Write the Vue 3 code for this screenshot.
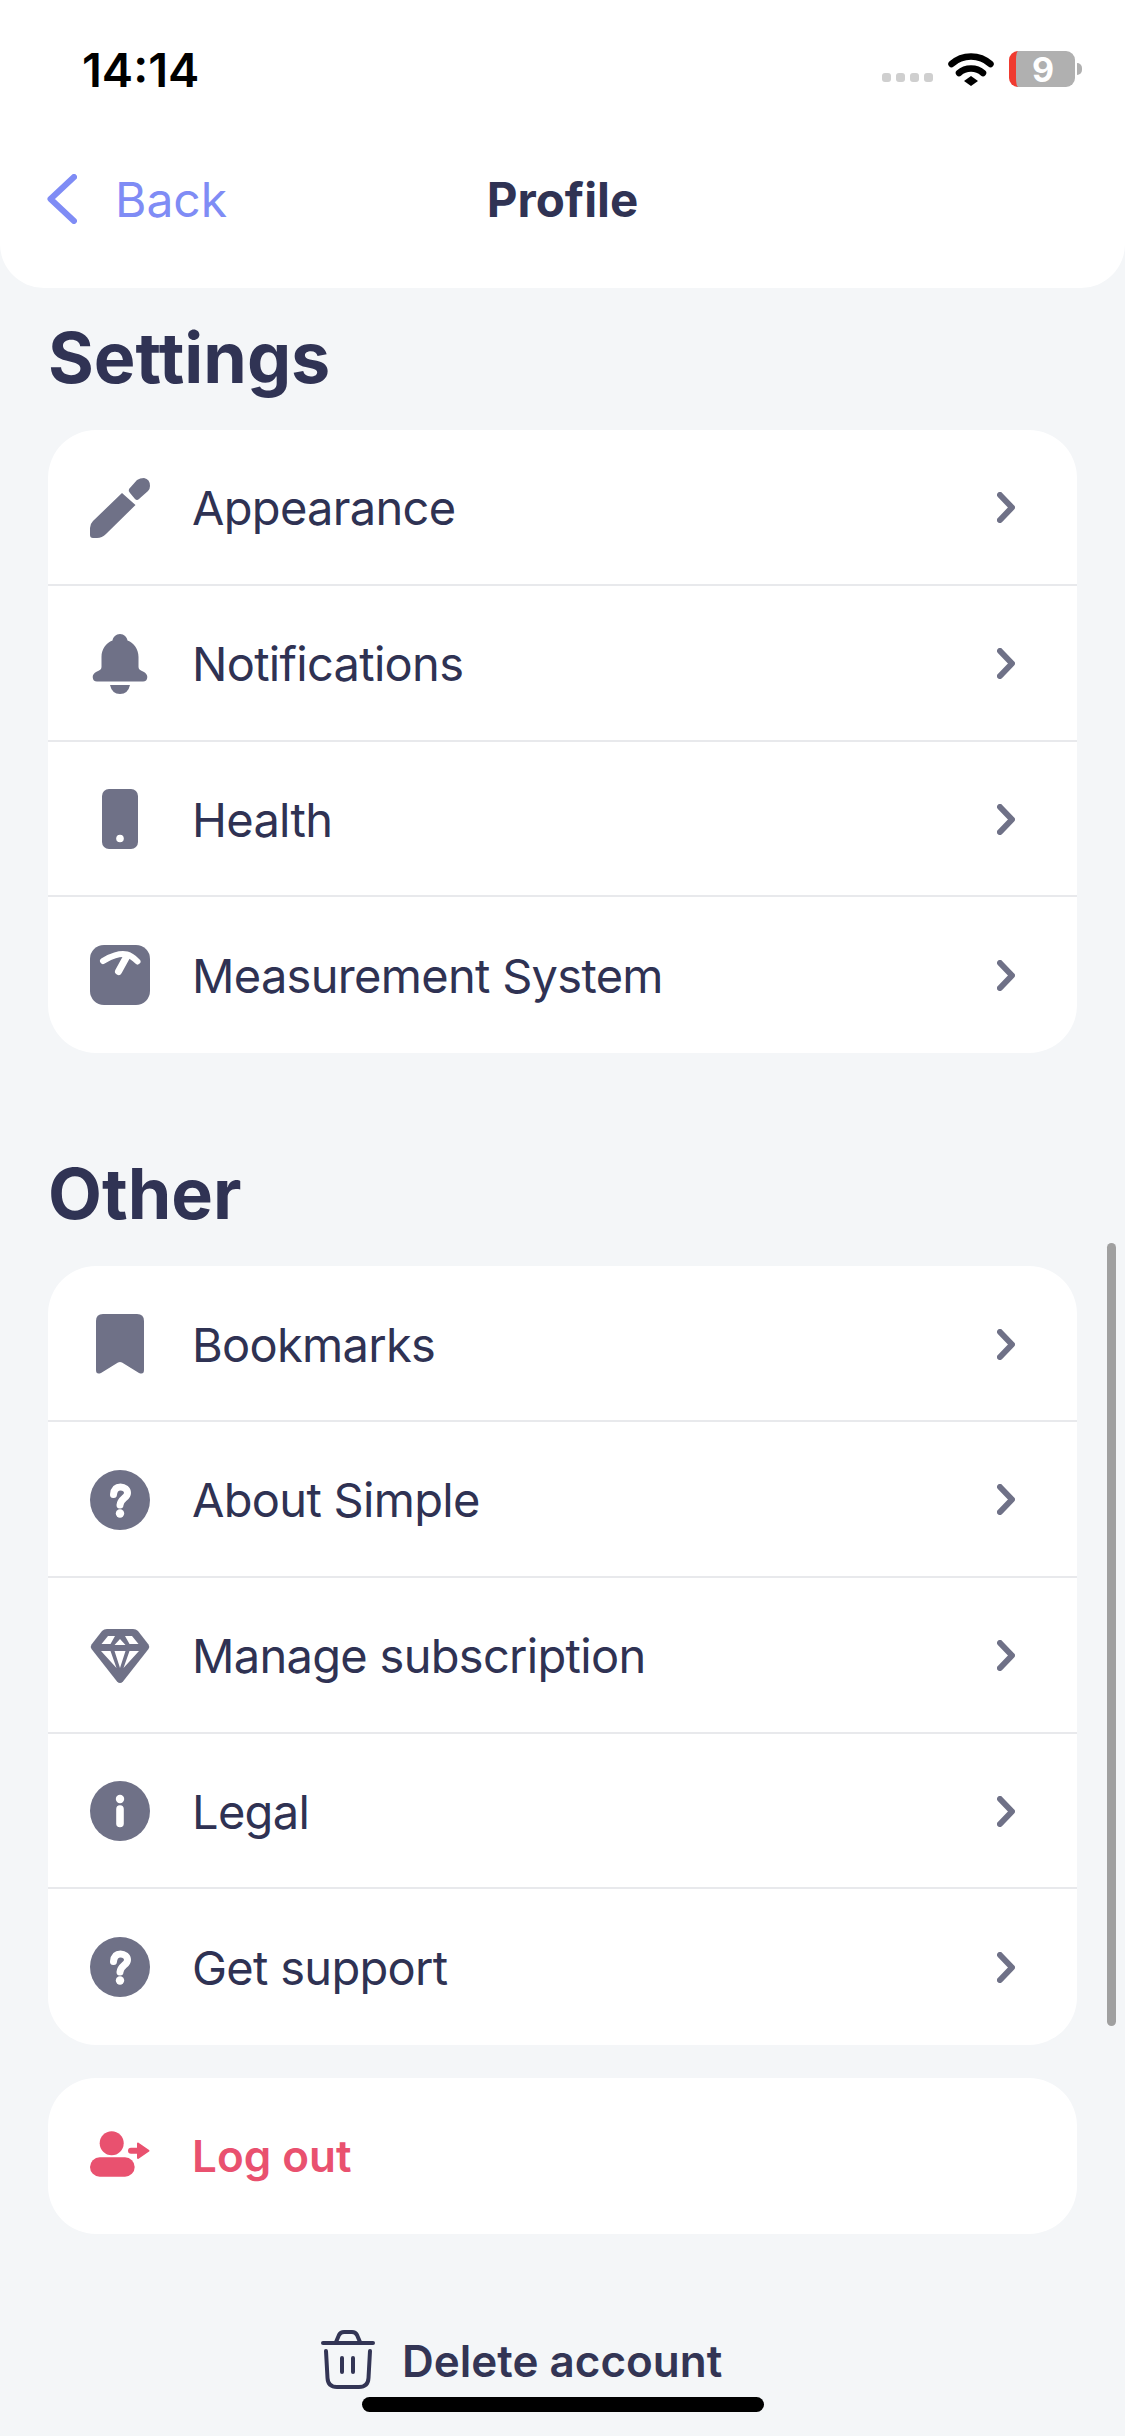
<script setup>
import { ref } from 'vue';

const sections = ref([
    {
        title: 'Settings',
        rows: [
            { label: 'Appearance', icon: 'pencil' },
            { label: 'Notifications', icon: 'bell' },
            { label: 'Health', icon: 'phone' },
            { label: 'Measurement System', icon: 'scale' }
        ]
    },
    {
        title: 'Other',
        rows: [
            { label: 'Bookmarks', icon: 'bookmark' },
            { label: 'About Simple', icon: 'question' },
            { label: 'Manage subscription', icon: 'diamond' },
            { label: 'Legal', icon: 'info' },
            { label: 'Get support', icon: 'question' }
        ]
    }
]);
</script>

<template>
    <div class="page">
        <header class="top">
            <div class="status-bar">
                <span class="time">14:14</span>
                <div class="status-icons">
                    <div class="signal"><i></i><i></i><i></i><i></i></div>
                    <svg class="wifi" viewBox="0 0 46 33" width="46" height="33">
                        <path d="M3.500 11C14.500 1 31.500 1 42.500 11" fill="none" stroke="#000" stroke-width="6.500" stroke-linecap="round" />
                        <path d="M11 20C17.500 14 28.500 14 35 20" fill="none" stroke="#000" stroke-width="6.500" stroke-linecap="round" />
                        <path d="M23 23L30 28L23 33L16 28Z" fill="#000" />
                    </svg>
                    <div class="battery">
                        <div class="battery-body"><span>9</span></div>
                        <div class="battery-nub"></div>
                    </div>
                </div>
            </div>
            <nav class="nav">
                <div class="back">
                    <svg viewBox="0 0 30 50" width="30" height="50">
                        <path d="M27 3L3.500 25L27 47" fill="none" stroke="#7f8cf5" stroke-width="6" stroke-linecap="round" stroke-linejoin="round" />
                    </svg>
                    <span>Back</span>
                </div>
                <h1>Profile</h1>
                <div></div>
            </nav>
        </header>

        <main class="content">
            <section v-for="section in sections" :key="section.title" class="section">
                <h2>{{ section.title }}</h2>
                <div class="card">
                    <div v-for="row in section.rows" :key="row.label" class="row">
                        <svg class="row-icon" viewBox="0 0 60 60" width="60" height="60">
                            <template v-if="row.icon === 'pencil'">
                                <path d="M32 15L45.500 27L16 56Q12 60 7 60H3Q0 60 0 57V50Q0 46 3 43Z" />
                                <path d="M39 11L47 2Q50 0 54 0Q60 1 60 8Q60 11 58 13L49 21Q47 23 45 21L40 15Q38 13 39 11Z" />
                            </template>
                            <template v-else-if="row.icon === 'bell'">
                                <path d="M30 0C34 0 37 3 37.500 6.500C44 9 48.500 15 48.500 23V33C48.500 35 50 36.500 54 38C56 39 57.300 41 57.300 43C57.300 46 55.500 47.500 53 47.500H7C4.500 47.500 2.700 46 2.700 43C2.700 41 4 39 6 38C10 36.500 11.500 35 11.500 33V23C11.500 15 16 9 22.500 6.500C23 3 26 0 30 0Z" />
                                <path d="M20 51H40Q38 60 30 60Q22 60 20 51Z" />
                            </template>
                            <template v-else-if="row.icon === 'phone'">
                                <rect x="12" y="0" width="36" height="60" rx="7" />
                                <circle cx="30" cy="49.500" r="3.800" fill="#fff" />
                            </template>
                            <template v-else-if="row.icon === 'scale'">
                                <rect x="0" y="0" width="60" height="60" rx="14" />
                                <path d="M13 16C20 11 30 8 37 9.500C41 10.500 44 13 47.500 16.500" fill="none" stroke="#fff" stroke-width="6" stroke-linecap="round" />
                                <path d="M37 11L28.500 26.500" fill="none" stroke="#fff" stroke-width="7" stroke-linecap="round" />
                            </template>
                            <template v-else-if="row.icon === 'bookmark'">
                                <path d="M13 0H47Q54 0 54 7V56Q54 61 49 59L32 48.500Q30 47.500 28 48.500L11 59Q6 61 6 56V7Q6 0 13 0Z" />
                            </template>
                            <template v-else-if="row.icon === 'question'">
                                <circle cx="30" cy="30" r="30" />
                                <path d="M23.500 24.500C24 19 27 17 30.500 17C34.500 17 37.500 19.500 37.500 23C37.500 28 30.500 28.500 30 35" fill="none" stroke="#fff" stroke-width="7" stroke-linecap="round" />
                                <circle cx="30" cy="43.500" r="4.200" fill="#fff" />
                            </template>
                            <template v-else-if="row.icon === 'diamond'">
                                <path d="M17 3H43Q46 3 48 5L58.500 18.500Q60 21 58.500 23L33 55.500Q30 58.500 27 55.500L1.500 23Q0 21 1.500 18.500L12 5Q14 3 17 3Z" />
                                <path d="M18 10L25 10L20.500 18H11.500ZM35 10H42L48.500 18H39.500ZM30 13L35.500 19H24.500ZM11 25H20.500L26.500 42ZM24.500 25H35.500L30 42ZM39.500 25H49L33.500 42Z" fill="#fff" />
                            </template>
                            <template v-else-if="row.icon === 'info'">
                                <circle cx="30" cy="30" r="30" />
                                <circle cx="30" cy="18" r="4.200" fill="#fff" />
                                <path d="M30 28V42.500" fill="none" stroke="#fff" stroke-width="7.600" stroke-linecap="round" />
                            </template>
                        </svg>
                        <span class="row-label">{{ row.label }}</span>
                        <svg class="chevron" viewBox="0 0 18 31" width="18" height="31">
                            <path d="M3 3L15 15.500L3 28" fill="none" stroke="#6f7187" stroke-width="6" stroke-linecap="round" stroke-linejoin="round" />
                        </svg>
                    </div>
                </div>
            </section>

            <div class="card logout">
                <div class="row">
                    <svg class="row-icon logout-icon" viewBox="0 0 60 60" width="60" height="60">
                        <circle cx="21.700" cy="17.300" r="12" />
                        <rect x="0" y="31.300" width="44.700" height="19.400" rx="9.700" />
                        <path d="M41 24.700H50" fill="none" stroke="#e9516f" stroke-width="6" stroke-linecap="round" />
                        <path d="M48 17.500L58.500 24.700L48 32Z" stroke="#e9516f" stroke-width="2" stroke-linejoin="round" />
                    </svg>
                    <span class="row-label logout-label">Log out</span>
                </div>
            </div>

            <div class="delete">
                <svg viewBox="0 0 54 59" width="54" height="59">
                    <g fill="none" stroke="#333555" stroke-width="4" stroke-linecap="round" stroke-linejoin="round">
                        <path d="M2 13H52" />
                        <path d="M15 12L18 5Q19.500 2 23 2H31Q34.500 2 36 5L39 12" />
                        <path d="M5 21L6.500 48Q7 57 16 57H38Q47 57 47.500 48L49 21" />
                        <path d="M21 28V42M32 28V42" />
                    </g>
                </svg>
                <span>Delete account</span>
            </div>
        </main>

        <div class="scrollbar"></div>
        <div class="home-indicator"></div>
    </div>
</template>

<style scoped>
.page {
    position: relative;
    width: 1125px;
    height: 2436px;
    overflow: hidden;
    background: #f4f6f8;
    font-family: Inter, "Liberation Sans", sans-serif;
    color: #2f3253;
}

.top {
    height: 288px;
    background: #fff;
    border-radius: 0 0 44px 44px;
}

.status-bar {
    display: flex;
    justify-content: space-between;
    align-items: center;
    height: 138px;
    padding: 0 43px 0 82px;
}

.time {
    font-size: 47px;
    font-weight: 600;
    color: #000;
}

.status-icons {
    display: flex;
    align-items: center;
}

.signal {
    display: flex;
    gap: 5px;
    margin: 16px 15px 0 0;
}

.signal i {
    width: 9px;
    height: 9px;
    border-radius: 3px;
    background: #cfcfcf;
}

.battery {
    display: flex;
    align-items: center;
    margin-left: 15px;
}

.battery-body {
    display: flex;
    justify-content: center;
    align-items: center;
    width: 66px;
    height: 36px;
    box-sizing: border-box;
    padding-right: 5px;
    border-left: 7px solid #f03b30;
    border-radius: 9px;
    background: #b0b0b0;
    color: #fff;
    font-size: 34px;
    font-weight: 700;
}

.battery-nub {
    width: 5px;
    height: 12px;
    margin-left: 2px;
    border-radius: 0 6px 6px 0;
    background: #b0b0b0;
}

.nav {
    display: grid;
    grid-template-columns: 1fr auto 1fr;
    align-items: center;
    height: 122px;
    padding: 0 47px;
}

.back {
    display: flex;
    align-items: center;
    gap: 38px;
    font-size: 48px;
    color: #7f8cf5;
}

.nav h1 {
    margin: 0;
    font-size: 47.500px;
    font-weight: 700;
    color: #303354;
}

.content {
    padding: 0 48px;
}

.section h2 {
    margin: 0;
    font-size: 70px;
    line-height: 84px;
    font-weight: 700;
    color: #303354;
}

.section {
    padding-top: 28px;
    margin-bottom: 33px;
}

.section + .section {
    padding-top: 66px;
}

.card {
    margin-top: 30px;
    border-radius: 48px;
    background: #fff;
    overflow: hidden;
}

.row {
    display: flex;
    align-items: center;
    height: 155.800px;
    box-sizing: border-box;
    padding: 2px 62px 0 42px;
    border-bottom: 2px solid #e8e9ec;
}

.row:last-child {
    padding-top: 0;
    border-bottom: 0;
}

.row-icon {
    flex: none;
    fill: #6f7187;
}

.row-label {
    flex: 1;
    margin-left: 42px;
    font-size: 47px;
    letter-spacing: -0.700px;
}

.chevron {
    flex: none;
}

.logout {
    margin-top: 0;
}

.logout-icon {
    fill: #e9516f;
}

.logout-label {
    font-size: 44px;
    letter-spacing: 0;
    font-weight: 600;
    color: #e9516f;
}

.delete {
    display: flex;
    align-items: center;
    gap: 27px;
    margin: 96px 0 0 273px;
    font-size: 44px;
    font-weight: 600;
    color: #333555;
}

.delete svg {
    margin-bottom: 4px;
}

.scrollbar {
    position: absolute;
    top: 1243px;
    left: 1107px;
    width: 9px;
    height: 783px;
    border-radius: 5px;
    background: #a0a0a0;
}

.home-indicator {
    position: absolute;
    top: 2397px;
    left: 362px;
    width: 402px;
    height: 15px;
    border-radius: 8px;
    background: #000;
}
</style>
